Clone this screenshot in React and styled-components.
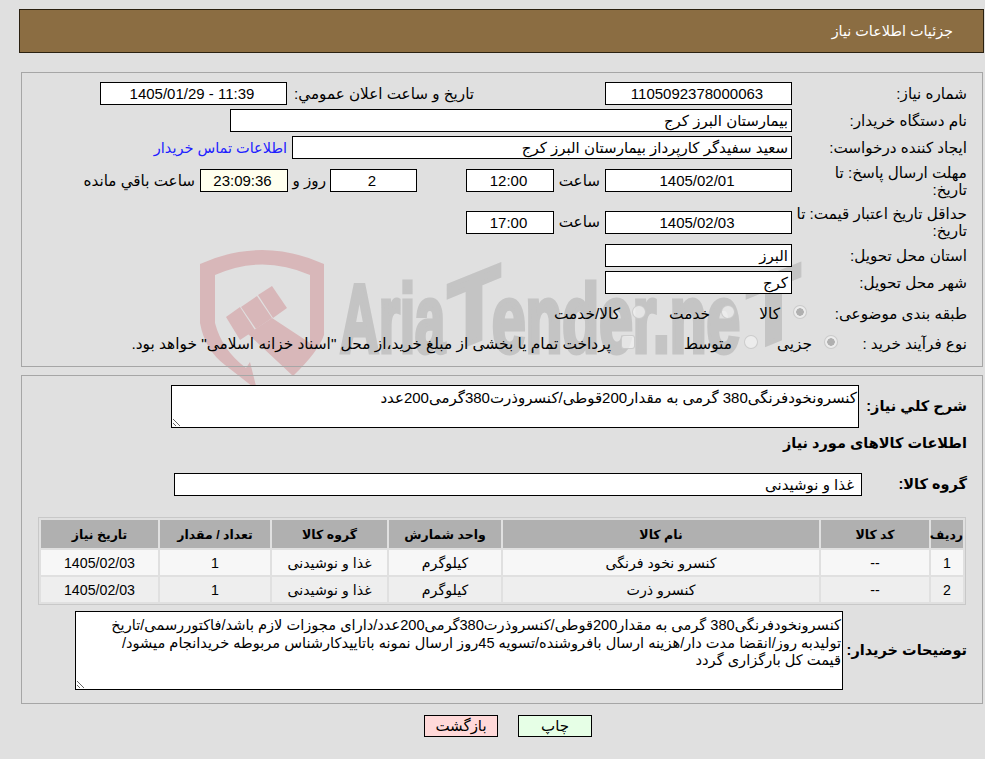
import styled, { createGlobalStyle } from "styled-components";

const GlobalStyle = createGlobalStyle`
  html, body {
    margin: 0;
    padding: 0;
    background: #e0e0e0;
  }
  body {
    font-family: "Liberation Sans", "DejaVu Sans", sans-serif;
    font-size: 15px;
    color: #000;
  }
`;

const Page = styled.div`
  position: relative;
  width: 985px;
  height: 759px;
  overflow: hidden;
  direction: rtl;
`;

const Watermark = styled.svg`
  position: absolute;
  left: 190px;
  top: 240px;
  width: 620px;
  height: 170px;
  direction: ltr;
`;

const Content = styled.div`
  position: relative;
  padding: 9px 1px 0 19px;
`;

const Header = styled.div`
  height: 42px;
  background: #8b6d42;
  border: 1px solid #2a2010;
  color: #fff;
  display: flex;
  align-items: center;
  padding-right: 30px;
  font-size: 14.4px;
`;

const Panel = styled.div`
  border: 1px solid #a6a6a6;
  margin-left: 2px;
  margin-right: 1px;
  padding: ${(p) => p.$pad};
  margin-top: ${(p) => p.$top}px;
  height: ${(p) => p.$h}px;
  box-sizing: border-box;
`;

const Row = styled.div`
  display: flex;
  align-items: center;
  min-height: ${(p) => p.$h || 23}px;
  margin-top: ${(p) => p.$top || 0}px;
`;

const Label = styled.div`
  flex: none;
  width: ${(p) => p.$w || 175}px;
  margin-left: ${(p) => p.$gap || 0}px;
  line-height: 17px;
  white-space: nowrap;
  font-size: ${(p) => (p.$bold ? 14.5 : 15.2)}px;
  font-weight: ${(p) => (p.$bold ? "bold" : "normal")};
`;

const Field = styled.div`
  flex: none;
  box-sizing: border-box;
  width: ${(p) => p.$w}px;
  height: 23px;
  margin-left: ${(p) => p.$gap || 0}px;
  line-height: 21px;
  border: 1px solid #000;
  background: ${(p) => (p.$warm ? "#ffffee" : "#fff")};
  text-align: ${(p) => (p.$center ? "center" : "right")};
  padding-right: ${(p) => (p.$pad ? 7 : 3)}px;
  font-size: 15px;
`;

const Note = styled.span`
  flex: none;
  width: ${(p) => p.$w}px;
  margin-left: ${(p) => p.$gap || 0}px;
  font-size: 15.2px;
  white-space: nowrap;
`;

const ContactLink = styled.a`
  color: #2020ff;
  font-size: 14.5px;
  white-space: nowrap;
`;

const Radio = styled.span`
  flex: none;
  box-sizing: border-box;
  width: 14px;
  height: 14px;
  margin-bottom: 3px;
  border-radius: ${(p) => (p.$square ? "3px" : "50%")};
  border: 1px solid rgba(190, 190, 190, 0.7);
  background: ${(p) =>
    p.$on
      ? "radial-gradient(circle, #b0b0b0 0 3.5px, #ececec 4px)"
      : "rgba(240, 240, 240, 0.75)"};
  margin-left: ${(p) => p.$gap}px;
`;

const Option = styled(Note)`
  font-size: 15.4px;
  line-height: 20px;
`;

const Box = styled.textarea`
  display: block;
  flex: none;
  box-sizing: border-box;
  width: ${(p) => p.$w}px;
  height: ${(p) => p.$h}px;
  border: 1px solid #000;
  border-radius: 0;
  outline: none;
  background: #fff;
  padding: ${(p) => p.$padTop || 3}px 1px 1px 2px;
  margin: 0;
  resize: vertical;
  direction: rtl;
  overflow: hidden;
  font-family: inherit;
  font-size: ${(p) => p.$size || 15}px;
  line-height: 17.5px;
  color: #000;
`;

const Table = styled.table`
  border-collapse: separate;
  border-spacing: 2px;
  border: 1px solid #c8c8c8;
  table-layout: fixed;
  width: 928px;
  margin-right: 1px;
`;

const Th = styled.th`
  height: 28px;
  padding: 0;
  background: #b0b0b0;
  font-size: 12.5px;
  font-weight: bold;
`;

const Td = styled.td`
  height: 25px;
  padding: 0;
  text-align: center;
  font-size: 14.2px;
  background: ${(p) => (p.$alt ? "#eeeeee" : "#f7f7f7")};
`;

const Buttons = styled.div`
  display: flex;
  justify-content: center;
  gap: 20px;
  margin-top: 11px;
  padding-left: 13px;
`;

const Button = styled.button`
  box-sizing: border-box;
  width: 74px;
  height: 22px;
  padding: 0;
  border: 1px solid #000;
  font-family: inherit;
  font-size: 15px;
  color: #000;
  background: ${(p) => (p.$tone === "back" ? "#ffd9d9" : "#e6ffe6")};
`;

const columns = [
  { title: "ردیف", w: 32 },
  { title: "کد کالا", w: 108 },
  { title: "نام کالا", w: 316 },
  { title: "واحد شمارش", w: 112 },
  { title: "گروه کالا", w: 115 },
  { title: "تعداد / مقدار", w: 110 },
  { title: "تاریخ نیاز", w: 117 },
];

const items = [
  { id: 1, name: "کنسرو نخود فرنگی" },
  { id: 2, name: "کنسرو ذرت" },
];

const description =
  "کنسرونخودفرنگی380 گرمی به مقدار200قوطی/کنسروذرت380گرمی200عدد/دارای مجوزات لازم باشد/فاکتوررسمی/تاریخ\n" +
  "تولیدبه روز/انقضا مدت دار/هزینه ارسال بافروشنده/تسویه 45روز ارسال نمونه باتاییدکارشناس مربوطه خریدانجام میشود/\n" +
  "قیمت کل بارگزاری گردد";

function Logo() {
  const text = {
    fill: "#c4c4c4",
    stroke: "#c4c4c4",
    strokeWidth: 5,
    fontFamily: "Liberation Sans",
    fontWeight: 700,
    fontSize: 96,
    lengthAdjust: "spacingAndGlyphs",
  };
  return (
    <Watermark viewBox="190 240 620 170">
      <g fill="#d8b7b9">
        <path d="M200 323 L200 264 Q262 236 324 264 L324 335 Q318 352 293 376 L248 334 L272 318 L310 343 L310 275 Q262 254 215 275 L215 323 Z" />
        <path d="M200 323 Q205 350 225 365 L257 390 L250 362 L246 368 Q222 350 215 323 Z" />
        <path d="M226 317 L240 307 L255 330 L240 340 Z" />
        <path d="M241 307 L257 296 L272 318 L256 329 Z" />
        <path d="M258 295 L272 286 L287 308 L273 318 Z" />
      </g>
      <text x="340" y="352" textLength="105" {...text}>Aria</text>
      <text transform="translate(448 352) skewY(-22)" textLength="52" {...text}>T</text>
      <text x="492" y="352" textLength="248" {...text}>ender.ne</text>
      <text transform="translate(747 352) skewY(-22)" textLength="53" {...text}>T</text>
    </Watermark>
  );
}

function App() {
  return (
    <Page>
      <GlobalStyle />
      <Logo />
      <Content>
        <Header>جزئیات اطلاعات نیاز</Header>
        <Panel $top={19} $h={295} $pad="9px 15px 0 0">
          <Row>
            <Label>شماره نیاز:</Label>
            <Field $w={187} $center $gap={131}>1105092378000063</Field>
            <Label $w={181} $gap={6}>تاریخ و ساعت اعلان عمومي:</Label>
            <Field $w={187} $center>11:39 - 1405/01/29</Field>
          </Row>
          <Row $top={4}>
            <Label>نام دستگاه خریدار:</Label>
            <Field $w={562}>بیمارستان البرز کرج</Field>
          </Row>
          <Row $top={4}>
            <Label>ایجاد کننده درخواست:</Label>
            <Field $w={500} $gap={5}>سعید سفیدگر کارپرداز بیمارستان البرز کرج</Field>
            <ContactLink>اطلاعات تماس خریدار</ContactLink>
          </Row>
          <Row $h={35} $top={4}>
            <Label>مهلت ارسال پاسخ: تا<br />تاریخ:</Label>
            <Field $w={187} $center $gap={5}>1405/02/01</Field>
            <Note $w={46}>ساعت</Note>
            <Field $w={88} $center $gap={49}>12:00</Field>
            <Field $w={87} $center $gap={4}>2</Field>
            <Note $w={38}>روز و</Note>
            <Field $w={88} $warm $center $gap={5}>23:09:36</Field>
            <Note>ساعت باقي مانده</Note>
          </Row>
          <Row $h={36} $top={6}>
            <Label>حداقل تاریخ اعتبار قیمت: تا<br />تاریخ:</Label>
            <Field $w={187} $center $gap={5}>1405/02/03</Field>
            <Note $w={46}>ساعت</Note>
            <Field $w={88} $center>17:00</Field>
          </Row>
          <Row $top={4}>
            <Label>استان محل تحویل:</Label>
            <Field $w={187}>البرز</Field>
          </Row>
          <Row $top={4}>
            <Label>شهر محل تحویل:</Label>
            <Field $w={187}>کرج</Field>
          </Row>
          <Row $top={8}>
            <Label $w={160}>طبقه بندی موضوعی:</Label>
            <Radio $on $gap={13} />
            <Option $w={45}>کالا</Option>
            <Radio $gap={11} />
            <Option $w={64}>خدمت</Option>
            <Radio $gap={12} />
            <Option>کالا/خدمت</Option>
          </Row>
          <Row $top={7}>
            <Label $w={129}>نوع فرآیند خرید :</Label>
            <Radio $on $gap={12} />
            <Option $w={54}>جزیی</Option>
            <Radio $gap={12} />
            <Option $w={97}>متوسط</Option>
            <Radio $square $gap={10} />
            <Option>پرداخت تمام یا بخشی از مبلغ خرید،از محل "اسناد خزانه اسلامی" خواهد بود.</Option>
          </Row>
        </Panel>
        <Panel $top={8} $h={329} $pad="9px 15px 0 0">
          <Row $h={43}>
            <Label $w={108} $bold>شرح کلي نياز:</Label>
            <Box $w={688} $h={43} readOnly value="کنسرونخودفرنگی380 گرمی به مقدار200قوطی/کنسروذرت380گرمی200عدد" />
          </Row>
          <Row $h={30}>
            <Label $w={300} $bold>اطلاعات کالاهای مورد نیاز</Label>
          </Row>
          <Row $top={15}>
            <Label $w={105} $bold>گروه کالا:</Label>
            <Field $w={688} $pad>غذا و نوشیدنی</Field>
          </Row>
          <Row $top={21}>
            <Table>
              <colgroup>
                {columns.map((c) => (
                  <col key={c.title} style={{ width: c.w }} />
                ))}
              </colgroup>
              <thead>
                <tr>
                  {columns.map((c) => (
                    <Th key={c.title}>{c.title}</Th>
                  ))}
                </tr>
              </thead>
              <tbody>
                {items.map((item) => (
                  <tr key={item.id}>
                    <Td $alt={item.id === 2}>{item.id}</Td>
                    <Td $alt={item.id === 2}>--</Td>
                    <Td $alt={item.id === 2}>{item.name}</Td>
                    <Td $alt={item.id === 2}>کیلوگرم</Td>
                    <Td $alt={item.id === 2}>غذا و نوشیدنی</Td>
                    <Td $alt={item.id === 2}>1</Td>
                    <Td $alt={item.id === 2}>1405/02/03</Td>
                  </tr>
                ))}
              </tbody>
            </Table>
          </Row>
          <Row $top={6}>
            <Label $w={124} $bold>توضیحات خریدار:</Label>
            <Box $w={768} $h={79} $size={14.6} $padTop={5} readOnly value={description} />
          </Row>
        </Panel>
        <Buttons>
          <Button>چاپ</Button>
          <Button $tone="back">بازگشت</Button>
        </Buttons>
      </Content>
    </Page>
  );
}

export default App;
